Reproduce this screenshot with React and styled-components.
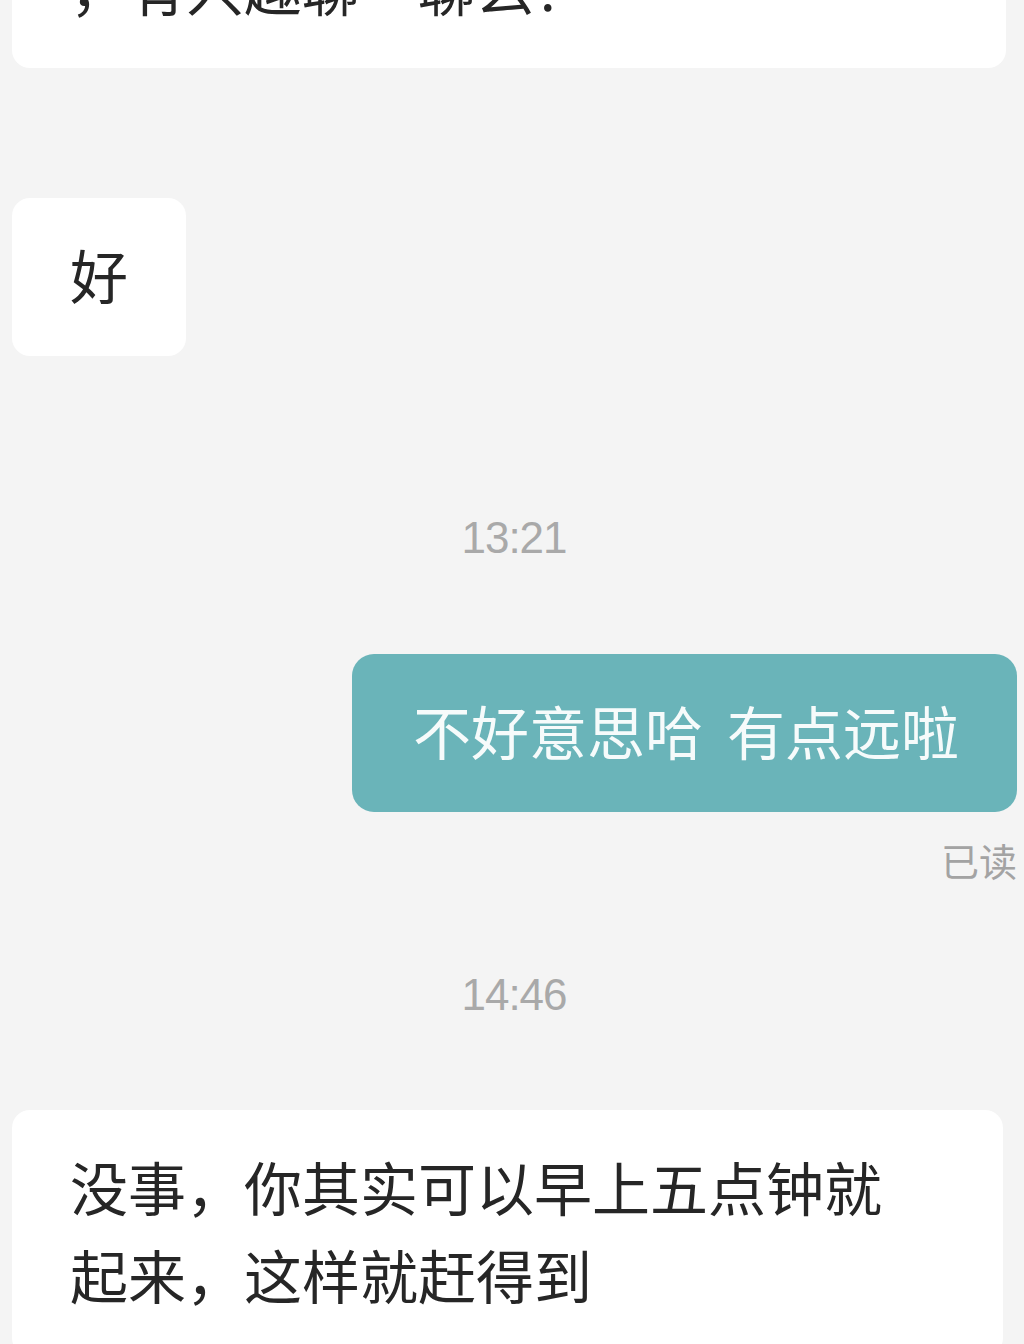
import React from "react";
import styled, { createGlobalStyle } from "styled-components";

const Global = createGlobalStyle`
  html, body {
    margin: 0;
    padding: 0;
    background: #f4f4f4;
  }
  #root {
    height: 1344px;
    overflow: hidden;
  }
`;

const Chat = styled.div`
  display: flex;
  flex-direction: column;
  height: 1344px;
  overflow: hidden;
  background: #f4f4f4;
  font-family: "Noto Sans CJK SC", "Noto Sans", sans-serif;
`;

const Bubble = styled.div`
  box-sizing: border-box;
  align-self: ${(p) => (p.$mine ? "flex-end" : "flex-start")};
  margin: ${(p) => p.$mt}px ${(p) => (p.$mine ? 7 : 0)}px 0 ${(p) => (p.$mine ? 0 : 12)}px;
  width: ${(p) => (p.$w ? `${p.$w}px` : "auto")};
  padding: 32px 58px 38px ${(p) => (p.$mine ? 61 : 58)}px;
  border-radius: ${(p) => (p.$mine ? 22 : 18)}px;
  background: ${(p) => (p.$mine ? "#6ab4b9" : "#ffffff")};
  color: ${(p) => (p.$mine ? "#f6fbfb" : "#262626")};
  font-size: 58px;
  line-height: 88px;
  word-spacing: ${(p) => (p.$mine ? 11 : 0)}px;
  white-space: pre;
  flex-shrink: 0;
`;

const Time = styled.div`
  align-self: center;
  margin-top: ${(p) => p.$mt}px;
  margin-left: ${(p) => p.$dx || 0}px;
  font-family: "Liberation Sans", Arial, sans-serif;
  font-size: 44px;
  line-height: 44px;
  letter-spacing: -1px;
  color: #a9a9a9;
  flex-shrink: 0;
`;

const ReadMark = styled.div`
  align-self: flex-end;
  margin: 29px 7px 0 0;
  font-size: 38px;
  line-height: 38px;
  color: #a3a3a3;
  flex-shrink: 0;
`;

export default function App() {
  return (
    <>
      <Global />
      <Chat>
        <Bubble $mt={-178} $w={994}>
          {"周末我们在城南有个聚会活动\n，有兴趣聊一聊么？"}
        </Bubble>
        <Bubble $mt={130}>好</Bubble>
        <Time $mt={160} $dx={4}>13:21</Time>
        <Bubble $mine $mt={94}>不好意思哈 有点远啦</Bubble>
        <ReadMark>已读</ReadMark>
        <Time $mt={94} $dx={4}>14:46</Time>
        <Bubble $mt={93} $w={991}>
          {"没事，你其实可以早上五点钟就\n起来，这样就赶得到"}
        </Bubble>
      </Chat>
    </>
  );
}
